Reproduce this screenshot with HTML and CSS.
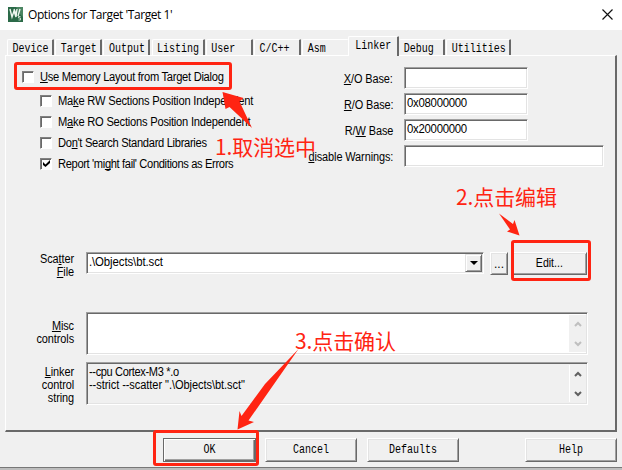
FILE: index.html
```html
<!DOCTYPE html>
<html lang="en">
<head>
<meta charset="utf-8">
<title>Options for Target 'Target 1'</title>
<link rel="stylesheet" href="styles.css">
</head>
<body>
<div class="dialog">
  <header class="titlebar">
    <svg class="logo" width="15" height="15" viewBox="0 0 15 15">
      <rect width="15" height="15" fill="#2b6a48"/>
      <path d="M8 0h7v10L12 7z" fill="#4b8562"/>
      <path d="M2 2l2 8 2-6 2 6 1-8M6 2l2 5M12 2l-2 7" stroke="#eef6f0" stroke-width="1.4" fill="none"/>
      <path d="M12.500 9.500h-2v1.500h2v2h-2" stroke="#c4dacb" fill="none"/>
    </svg>
    <h1>Options for Target 'Target 1'</h1>
    <svg class="close" width="11" height="11" viewBox="0 0 11 11"><path d="M.5.5l10 10M10.500.5l-10 10" stroke="#111" stroke-width="1.150"/></svg>
  </header>
  <nav class="tabs">
    <div class="tab"><span>Device</span></div><div class="tab"><span>Target</span></div><div class="tab"><span>Output</span></div><div class="tab listing"><span>Listing</span></div><div class="tab"><span>User</span></div><div class="tab"><span>C/C++</span></div><div class="tab asm"><span>Asm</span></div><div class="tab active"><span>Linker</span></div><div class="tab debug"><span>Debug</span></div><div class="tab utilities"><span>Utilities</span></div>
  </nav>
  <main class="panel">
    <section class="settings">
      <div class="options">
        <label class="option main-option"><i class="check"></i><span class="t-mem"><u>U</u>se Memory Layout from Target Dialog</span></label>
        <label class="option"><i class="check"></i><span class="t-rw">Ma<u>k</u>e RW Sections Position Independent</span></label>
        <label class="option"><i class="check"></i><span class="t-ro">M<u>a</u>ke RO Sections Position Independent</span></label>
        <label class="option"><i class="check"></i><span class="t-lib">Do<u>n</u>'t Search Standard Libraries</span></label>
        <label class="option"><i class="check"><svg width="9" height="9" viewBox="0 0 9 9"><path d="M1 3l2.500 2.500L8 1v3L3.500 8 1 6z"/></svg></i><span class="t-err">Report 'mi<u>g</u>ht fail' Conditions as Errors</span></label>
      </div>
      <div class="fields">
        <span class="name"><u>X</u>/O Base:</span><div class="input"></div>
        <span class="name"><u>R</u>/O Base:</span><div class="input"><span>0x08000000</span></div>
        <span class="name">R/<u>W</u> Base</span><div class="input"><span>0x20000000</span></div>
        <span class="name"><u>d</u>isable Warnings:</span><div class="input wide"></div>
      </div>
    </section>
    <section class="scatter">
      <span class="name">Sca<u>t</u>ter<br><u>F</u>ile</span>
      <div class="input combo"><span>.\Objects\bt.sct</span><i class="drop"></i></div>
      <div class="button browse">...</div>
      <div class="button edit"><span>Edit...</span></div>
    </section>
    <section class="row misc">
      <span class="name"><u>M</u>isc<br>controls</span>
      <div class="area"><div class="content"></div><div class="scroll">
        <svg width="8" height="7" viewBox="0 0 8 7"><path d="M1 5l3-3 3 3"/></svg><svg width="8" height="7" viewBox="0 0 8 7"><path d="M1 2l3 3 3-3"/></svg></div></div>
    </section>
    <section class="row control">
      <span class="name"><u>L</u>inker<br>control<br>string</span>
      <div class="area"><div class="content"><span class="t-cpu">--cpu Cortex-M3 *.o</span><span class="t-strict">--strict --scatter ".\Objects\bt.sct"</span></div><div class="scroll">
        <svg width="8" height="7" viewBox="0 0 8 7"><path d="M1 5l3-3 3 3"/></svg><svg width="8" height="7" viewBox="0 0 8 7"><path d="M1 2l3 3 3-3"/></svg></div></div>
    </section>
  </main>
  <footer class="actions">
    <div class="button ok"><span>OK</span></div><div class="button"><span>Cancel</span></div><div class="button"><span>Defaults</span></div><div class="button help"><span>Help</span></div>
  </footer>
  <svg class="notes" width="622" height="470" viewBox="0 0 622 470">
    <g class="frames">
      <rect x="15.500" y="63.500" width="215" height="25" rx="1.500"/>
      <rect x="512.500" y="241.500" width="77" height="38" rx="1.500"/>
      <rect x="154.500" y="431.500" width="103" height="33" rx="1.500"/>
    </g>
    <path d="M222.500 92L243.500 98L239.500 101.500L252 128L229.500 107L225.500 109z"/>
    <path d="M499 213.500L513 224L514.500 220L519.500 235.500L507 231.500L510 229.500z"/>
    <path d="M298.500 349L248.500 420.500L254 422L237.500 429.500L239.500 411L241.500 416L265 384z"/>
    <text x="215" y="154.500" textLength="101">1.取消选中</text>
    <text x="456" y="205" textLength="101">2.点击编辑</text>
    <text x="295" y="349" textLength="101">3.点击确认</text>
  </svg>
</div>
</body>
</html>
```
FILE: styles.css
```css
* { box-sizing: border-box; }
body { margin: 0; background: #f0f0f0; color: #000; font: 12px/13px "Liberation Sans", Arial, sans-serif; overflow: hidden; }
u { text-decoration-thickness: 1px; text-underline-offset: 1px; text-decoration-skip-ink: none; }
.dialog { position: relative; width: 622px; height: 470px; display: flex; flex-direction: column; }
.dialog::after { content: ""; margin-top: auto; height: 2px; background: #bdbdbd; border-top: 1px solid #777; }
.titlebar { height: 30px; background: #fff; display: flex; align-items: center; padding: 0 9px 2px 7px; }
.titlebar h1 { margin: 2px 0 0 5px; flex: 1; font: 12px/16px "Open Sans", "Noto Sans", sans-serif; letter-spacing: -.42px; }
.logo { margin-left: 1px; }

.tabs { height: 25px; padding-left: 7px; display: flex; align-items: flex-end; font: 10px/17px "Liberation Mono", monospace; }
.tab { height: 16px; width: 47px; margin-right: 1.200px; padding-left: 4.500px; border: 1px solid #fff; border-right: 2px solid #696969; border-bottom: 0; border-radius: 2px 1px 0 0; white-space: nowrap; }
.tab span, .actions span { display: inline-block; transform: scaleY(1.2); }
.tab.listing { width: 53px; }
.tab.asm { width: 46px; margin-right: 0; border-right: 0; }
.tab.active { width: 51px; height: 20px; margin: 0 0 -1px; padding-left: 6px; background: #f0f0f0; position: relative; line-height: 19px; }
.tab.debug { width: 46px; border-left: 0; }
.tab.utilities { width: 65px; }

.panel { margin: 0 5px; height: 377px; border: 1px solid #fff; border-right: 2px solid #696969; border-bottom: 2px solid #696969; }
.settings { height: 196px; display: flex; padding: 11px 0 0 16px; }
.options { width: 262px; padding-top: 3px; }
.option { display: flex; align-items: center; height: 21px; padding-left: 18px; gap: 6px; white-space: nowrap; }
.option span { transform: scaleX(.93); transform-origin: left; position: relative; top: 1px; }
.t-mem { letter-spacing: -.31px; }
.t-rw { letter-spacing: -.22px; }
.t-ro { letter-spacing: -.25px; }
.t-lib { letter-spacing: -.34px; }
.option .t-err { letter-spacing: -.39px; }
.option.main-option { padding-left: 0; height: 13px; margin-bottom: 7px; }
.check { width: 12px; height: 12px; background: #fff; border: 1px solid; border-color: #808080 #fff #fff #808080; box-shadow: inset 1px 1px #696969; display: flex; flex: none; align-items: center; justify-content: center; }
.fields { display: grid; grid-template-columns: 109px 200px; column-gap: 11px; grid-auto-rows: 22px; row-gap: 4px; align-items: center; }
.fields .name { justify-self: end; position: relative; top: 1px; }
.name { text-align: right; white-space: nowrap; letter-spacing: -.1px; transform: scaleX(.91); transform-origin: right; }
.input { height: 22px; width: 124px; padding: 1px 2px; border: 1px solid; border-color: #a0a0a0 #fff #fff #a0a0a0; box-shadow: inset 1px 1px #696969, inset -1px -1px #e3e3e3; background: #fff; line-height: 17px; letter-spacing: -.3px; white-space: nowrap; }
.input span { display: inline-block; transform: scaleX(.95); transform-origin: left; }
.input.wide { width: 200px; }

.scatter { display: flex; height: 60px; align-items: flex-start; }
.scatter .name { width: 68px; margin-right: 12px; padding-top: 1px; }
.combo { width: 398px; display: flex; justify-content: space-between; padding: 1px; }
.input.combo span { padding-left: 1px; letter-spacing: -.1px; }
.drop { width: 17px; height: 18px; background: #f0f0f0; border: 1px solid; border-color: #e3e3e3 #696969 #696969 #e3e3e3; box-shadow: inset 1px 1px #fff, inset -1px -1px #a0a0a0; display: grid; place-items: center; }
.drop::after { content: ""; border: 4px solid transparent; border-top-color: #000; border-bottom: 0; }
.button { height: 24px; width: 92px; border: 1px solid; border-color: #fff #696969 #696969 #fff; box-shadow: inset 1px 1px #e3e3e3, inset -1px -1px #a0a0a0; background: #f0f0f0; text-align: center; line-height: 22px; }
.browse { width: 18px; margin-left: 6px; height: 23px; }
.edit { width: 76px; margin-left: 3px; height: 23px; line-height: 20px; }
.edit span { display: inline-block; transform: scaleX(.88); }

.row { display: flex; height: 50px; }
.row .name { width: 68px; margin-right: 12px; padding-top: 8px; }
.row.control .name { padding-top: 4px; }
.area { width: 502px; height: 43px; padding: 2px; border: 1px solid; border-color: #a0a0a0 #fff #fff #a0a0a0; box-shadow: inset 1px 1px #696969, inset -1px -1px #e3e3e3; background: #fff; display: flex; }
.content { flex: 1; padding-top: 1px; white-space: nowrap; }
.content span { display: block; transform: scaleX(.92); transform-origin: left; }
.t-cpu { letter-spacing: -.38px; }
.t-strict { letter-spacing: -.07px; }
.control .area { background: #f0f0f0; }
.control .scroll { border-left: 1px solid #fff; }
.scroll { width: 17px; margin: -1px 0; background: #f0f0f0; display: flex; flex-direction: column; justify-content: space-between; align-items: center; padding: 6px 0 5px; margin: 0 -1px 0 0; }
.scroll path { fill: none; stroke: #606060; stroke-width: 2; }
.misc .scroll path { stroke: #bfbfbf; }

.actions { display: flex; padding: 6px 5px 0 163px; gap: 10px; font: 10px/24px "Liberation Mono", monospace; }
.actions .button { line-height: 24px; }
.button.ok { width: 93px; border-color: #696969; box-shadow: inset 1px 1px #fff, inset -1px -1px #696969, inset -2px -2px #a0a0a0; margin-right: -1px; }
.button.help { margin-left: auto; }
.notes { position: absolute; left: 0; top: 0; fill: #ff2412; }
.frames { fill: none; stroke: #ff2412; stroke-width: 3; }
.notes text { font: 21px "Noto Sans CJK SC", sans-serif; font-weight: 400; }
```
